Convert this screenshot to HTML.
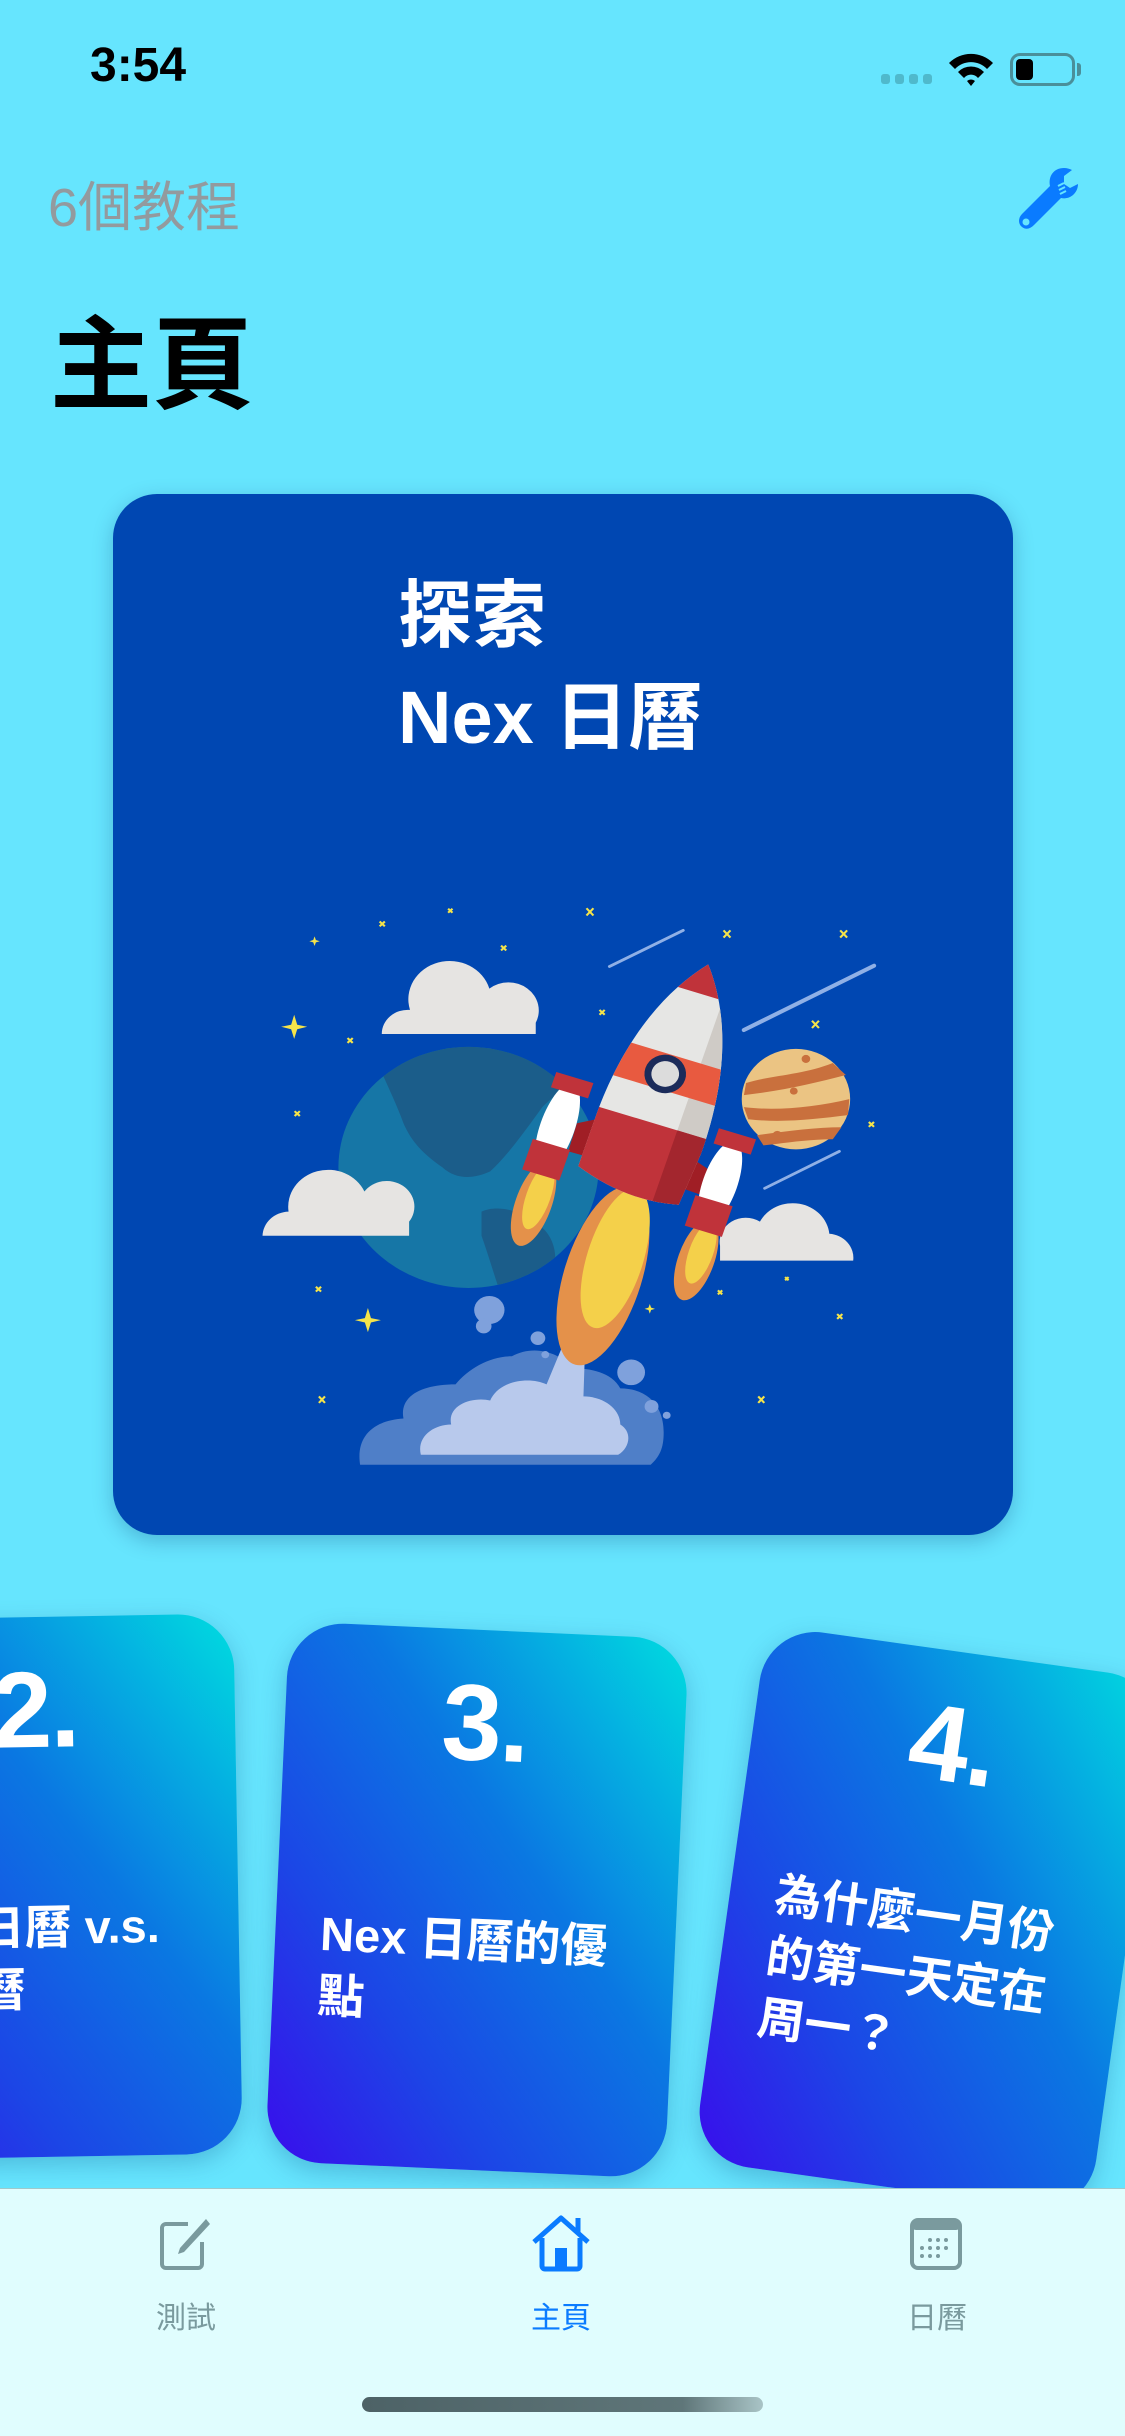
<!DOCTYPE html>
<html><head><meta charset="utf-8"><style>
*{margin:0;padding:0;box-sizing:border-box}
body{width:1125px;height:2436px;background:#66e5fe;position:relative;overflow:hidden;font-family:"Liberation Sans","Noto Sans CJK TC",sans-serif}
.abs{position:absolute}
.card{position:absolute;width:400px;height:540px;border-radius:56px;background:linear-gradient(to bottom left,#00dde0 0%,#0a78e2 40%,#1c45e6 72%,#3a0cec 100%);box-shadow:0 8px 24px rgba(0,60,120,.25);color:#fff;overflow:hidden}
.num{position:absolute;left:0;right:0;top:30px;text-align:center;font-size:108px;font-weight:bold;font-family:"Liberation Sans",sans-serif;letter-spacing:-2px}
.ct{position:absolute;left:45px;right:20px;top:280px;font-size:47px;line-height:62px;font-weight:bold;white-space:nowrap}
.tab{position:absolute;top:2188px;left:0;width:1125px;height:248px;background:#e0fdfe;border-top:1px solid #9fc9cc}
.lbl{position:absolute;top:2293px;width:120px;text-align:center;font-size:30px}
</style></head><body>
<!-- status bar -->
<div class="abs" style="left:90px;top:38px;font-size:48px;font-weight:bold;color:#000">3:54</div>
<div class="abs" style="left:881px;top:74px;width:51px;height:10px">
 <div class="abs" style="left:0;width:9px;height:10px;border-radius:3px;background:#4fb9cc"></div>
 <div class="abs" style="left:14px;width:9px;height:10px;border-radius:3px;background:#4fb9cc"></div>
 <div class="abs" style="left:28px;width:9px;height:10px;border-radius:3px;background:#4fb9cc"></div>
 <div class="abs" style="left:42px;width:9px;height:10px;border-radius:3px;background:#4fb9cc"></div>
</div>
<svg class="abs" style="left:946px;top:50px" width="50" height="36" viewBox="0 0 50 36">
 <path d="M3,13 A31,31 0 0 1 47,13 L41,19 A22,22 0 0 0 9,19Z" fill="#000"/>
 <path d="M12,22 A18,18 0 0 1 38,22 L32,28 A9,9 0 0 0 18,28Z" fill="#000"/>
 <path d="M21,31 L25,36 L29,31 A6,6 0 0 0 21,31Z" fill="#000"/>
</svg>
<div class="abs" style="left:1010px;top:53px;width:65px;height:33px;border:3px solid #4a8f9a;border-radius:10px"></div>
<div class="abs" style="left:1016px;top:59px;width:17px;height:21px;border-radius:4px;background:#000"></div>
<div class="abs" style="left:1077px;top:63px;width:4px;height:13px;border-radius:0 3px 3px 0;background:#4a8f9a"></div>

<div class="abs" style="left:48px;top:163px;font-size:54px;color:#939a9e">6個教程</div>
<svg class="abs" style="left:1012px;top:164px" width="68" height="68" viewBox="0 0 68 68">
 <path d="M52,4 C42,4 36,12 38,22 L10,50 C6,54 6,60 10,63 C14,66 18,65 22,61 L49,34 C58,36 66,29 66,20 L58,24 L52,20 L52,12 L60,6 C58,5 55,4 52,4Z" fill="#0a7bff"/>
 <circle cx="14" cy="58" r="3.5" fill="#66e5fe"/>
 <path d="M46,22 l6,-3 M47,26 l6,-3 M48,30 l6,-3" stroke="#66e5fe" stroke-width="2"/>
</svg>
<div class="abs" style="left:50px;top:284px;font-size:102px;font-weight:bold;color:#000">主頁</div>

<!-- big card -->
<div class="abs" style="left:113px;top:494px;width:900px;height:1041px;background:#0047b2;border-radius:44px;box-shadow:0 6px 20px rgba(0,40,100,.25)"></div>
<div class="abs" style="left:398px;top:565px;font-size:74px;line-height:102px;color:#fff;font-weight:bold">探索<br>Nex 日曆</div>

<svg class="abs" style="left:230px;top:850px" width="680" height="630" viewBox="0 0 1568 1568" preserveAspectRatio="none">
 <defs>
  <clipPath id="body"><path d="M0,-300 C80,-200 130,-50 130,150 L120,290 Q0,320 -130,270 L-130,150 C-130,-50 -80,-200 0,-300Z"/></clipPath>
  <clipPath id="earth"><circle cx="550" cy="790" r="300"/></clipPath>
 </defs>
 <g fill="#f5e44a">
  <path d="M148,410 L155,435 L178,440 L155,446 L148,470 L141,446 L118,440 L141,435Z"/>
  <path d="M318,1140 L325,1165 L348,1170 L325,1176 L318,1200 L311,1176 L288,1170 L311,1165Z"/>
  <path d="M968,1130 l3,9 l9,3 l-9,3 l-3,9 l-3,-9 l-9,-3 l9,-3Z"/>
  <path d="M195,215 l3,9 l9,3 l-9,3 l-3,9 l-3,-9 l-9,-3 l9,-3Z"/>
 </g>
 <g stroke="#f5e44a" stroke-width="5">
  <path d="M822,145 l16,18 M838,145 l-16,18"/><path d="M1138,200 l16,18 M1154,200 l-16,18"/><path d="M1407,200 l16,18 M1423,200 l-16,18"/>
  <path d="M1342,425 l16,18 M1358,425 l-16,18"/><path d="M345,178 l12,12 M357,178 l-12,12"/><path d="M503,146 l10,10 M513,146 l-10,10"/>
  <path d="M625,238 l12,12 M637,238 l-12,12"/><path d="M852,398 l12,12 M864,398 l-12,12"/><path d="M271,468 l12,12 M283,468 l-12,12"/>
  <path d="M149,650 l12,12 M161,650 l-12,12"/><path d="M1473,677 l12,12 M1485,677 l-12,12"/><path d="M198,1087 l12,12 M210,1087 l-12,12"/>
  <path d="M205,1360 l14,16 M219,1360 l-14,16"/><path d="M1218,1360 l14,16 M1232,1360 l-14,16"/><path d="M1400,1155 l12,12 M1412,1155 l-12,12"/>
  <path d="M1125,1096 l10,10 M1135,1096 l-10,10"/><path d="M1280,1063 l8,8 M1288,1063 l-8,8"/>
 </g>
 <g stroke="#8fb0e6" stroke-linecap="round">
  <path d="M875,290 L1045,200" stroke-width="7"/>
  <path d="M1185,448 L1485,288" stroke-width="10"/>
  <path d="M1233,842 L1405,750" stroke-width="7"/>
 </g>
 <circle cx="550" cy="790" r="300" fill="#1676a6"/>
 <g clip-path="url(#earth)" fill="#1b5d8a">
  <path d="M330,500 C400,460 520,450 620,470 C700,480 760,470 830,500 L850,560 C800,560 760,600 720,640 C680,700 640,760 600,800 C560,820 520,820 490,790 C450,760 420,730 400,680 C380,620 350,560 330,500Z"/>
  <path d="M580,900 C620,880 680,900 720,940 C760,980 760,1050 720,1100 C690,1140 660,1150 640,1150 C620,1100 600,1020 580,960Z"/>
  <path d="M700,420 C760,420 830,460 850,520 L800,520 C770,490 730,470 700,420Z"/>
 </g>
 <path d="M350,458 A60,60 0 0 1 415,398 A95,95 0 0 1 598,345 A70,70 0 0 1 705,430 L705,458Z" fill="#e6e4e2"/>
 <path d="M75,960 A62,62 0 0 1 135,900 A92,92 0 0 1 310,850 A62,62 0 0 1 413,925 L413,960Z" fill="#e6e4e2"/>
 <path d="M1130,1022 L1130,985 A60,60 0 0 1 1222,925 A85,85 0 0 1 1382,955 A60,60 0 0 1 1437,1022Z" fill="#e6e4e2"/>
 <circle cx="1305" cy="620" r="125" fill="#ebc483"/>
 <g fill="#c9703d">
  <path d="M1190,580 C1250,560 1320,560 1390,530 L1420,560 C1350,580 1270,600 1185,610Z"/>
  <path d="M1185,640 C1260,650 1350,640 1428,620 L1425,660 C1350,670 1270,680 1195,670Z"/>
  <path d="M1215,710 C1280,700 1350,690 1410,690 L1390,720 C1330,720 1280,730 1230,735Z"/>
  <circle cx="1328" cy="520" r="10"/><circle cx="1300" cy="600" r="9"/><circle cx="1262" cy="710" r="11"/><circle cx="1233" cy="578" r="7"/>
 </g>
 <path d="M300,1530 C290,1460 330,1420 400,1415 C390,1360 440,1330 520,1330 C550,1290 600,1260 650,1260 C700,1230 760,1250 790,1290 C830,1290 880,1300 900,1340 C960,1340 1000,1380 1000,1450 C1000,1490 990,1510 970,1530Z" fill="#4f7fc8"/>
 <path d="M440,1505 C430,1460 470,1430 510,1430 C500,1380 560,1360 600,1370 C620,1320 690,1310 730,1330 L780,1200 L820,1200 L815,1360 C860,1360 900,1390 900,1430 C930,1450 920,1490 895,1505Z" fill="#b8c9ec"/>
 <g fill="#7fa1dc"><circle cx="598" cy="1145" r="35"/><circle cx="585" cy="1185" r="18"/><circle cx="710" cy="1215" r="17"/><circle cx="727" cy="1256" r="9"/><circle cx="925" cy="1300" r="32"/><circle cx="972" cy="1385" r="16"/><circle cx="1007" cy="1407" r="9"/></g>
 <g transform="rotate(18 700 880)"><ellipse cx="700" cy="880" rx="42" ry="110" fill="#e4914a"/><ellipse cx="705" cy="860" rx="28" ry="85" fill="#f4d04a"/></g>
 <g transform="rotate(18 1075 1020)"><ellipse cx="1075" cy="1020" rx="42" ry="105" fill="#e4914a"/><ellipse cx="1080" cy="1000" rx="28" ry="80" fill="#f4d04a"/></g>
 <g transform="rotate(16 860 1060)"><ellipse cx="860" cy="1060" rx="90" ry="230" fill="#e4914a"/><ellipse cx="875" cy="1010" rx="65" ry="180" fill="#f4d04a"/></g>
 <path d="M800,680 L890,660 L1000,720 L1110,800 L1090,860 L880,780 L780,750Z" fill="#a01e25"/>
 <g transform="rotate(18 755 690)"><ellipse cx="755" cy="690" rx="40" ry="115" fill="#fff"/><rect x="710" y="560" width="90" height="40" fill="#c0333a"/><rect x="710" y="735" width="90" height="80" fill="#c0333a"/></g>
 <g transform="rotate(18 1130 830)"><ellipse cx="1130" cy="830" rx="40" ry="110" fill="#fff"/><rect x="1085" y="700" width="90" height="40" fill="#c0333a"/><rect x="1085" y="875" width="90" height="80" fill="#c0333a"/></g>
 <g transform="translate(1010,570) rotate(18)">
  <g clip-path="url(#body)">
   <rect x="-140" y="-310" width="280" height="620" fill="#e6e6e4"/>
   <rect x="60" y="-310" width="80" height="620" fill="#cfcbc6"/>
   <rect x="-140" y="-310" width="280" height="85" fill="#c0333a"/>
   <rect x="-140" y="-60" width="280" height="90" fill="#e85a40"/>
   <rect x="-140" y="115" width="280" height="200" fill="#c0333a"/>
   <rect x="60" y="115" width="80" height="200" fill="#a3262e"/>
  </g>
  <circle cx="-10" cy="-10" r="48" fill="#1b2b5a"/>
  <circle cx="-10" cy="-10" r="32" fill="#dcdcdc"/>
 </g>
</svg>

<div class="card" style="left:-162px;top:1617px;transform:rotate(-1deg)">
 <div class="num">2.</div>
 <div class="ct">農曆日曆 v.s.<br>農民曆</div>
</div>
<div class="card" style="left:277px;top:1630px;transform:rotate(2.6deg)">
 <div class="num">3.</div>
 <div class="ct">Nex 日曆的優<br>點</div>
</div>
<div class="card" style="left:728px;top:1650px;transform:rotate(8deg)">
 <div class="num">4.</div>
 <div class="ct" style="top:235px">為什麼一月份<br>的第一天定在<br>周一？</div>
</div>

<div class="tab"></div>
<svg class="abs" style="left:158px;top:2216px" width="56" height="56" viewBox="0 0 56 56">
 <path d="M30,8 H8 a4,4 0 0 0 -4,4 V48 a4,4 0 0 0 4,4 H40 a4,4 0 0 0 4,-4 V26" fill="none" stroke="#7a9a9e" stroke-width="4"/>
 <path d="M48,3 L22,32 L20,38 L26,36 L52,8Z" fill="#7a9a9e"/>
</svg>
<div class="lbl" style="left:126px;color:#7a9a9e">測試</div>
<svg class="abs" style="left:530px;top:2214px" width="62" height="58" viewBox="0 0 62 58">
 <path d="M4,28 L31,4 L58,28" fill="none" stroke="#0a7bff" stroke-width="5" stroke-linejoin="round"/>
 <path d="M48,4 V20" stroke="#0a7bff" stroke-width="5"/>
 <path d="M12,24 V52 a3,3 0 0 0 3,3 H47 a3,3 0 0 0 3,-3 V24" fill="none" stroke="#0a7bff" stroke-width="5"/>
 <rect x="25" y="34" width="12" height="21" fill="#0a7bff"/>
</svg>
<div class="lbl" style="left:501px;color:#0a7bff">主頁</div>
<svg class="abs" style="left:910px;top:2218px" width="52" height="52" viewBox="0 0 52 52">
 <rect x="2" y="2" width="48" height="48" rx="6" fill="none" stroke="#7a9a9e" stroke-width="4"/>
 <rect x="2" y="2" width="48" height="10" rx="4" fill="#7a9a9e"/>
 <g fill="#7a9a9e"><circle cx="20" cy="22" r="2"/><circle cx="28" cy="22" r="2"/><circle cx="36" cy="22" r="2"/><circle cx="12" cy="30" r="2"/><circle cx="20" cy="30" r="2"/><circle cx="28" cy="30" r="2"/><circle cx="36" cy="30" r="2"/><circle cx="12" cy="38" r="2"/><circle cx="20" cy="38" r="2"/><circle cx="28" cy="38" r="2"/></g>
</svg>
<div class="lbl" style="left:877px;color:#7a9a9e">日曆</div>
<div class="abs" style="left:362px;top:2397px;width:401px;height:15px;border-radius:8px;background:linear-gradient(to right,#4d6266,#5f7679 80%,#a9c4c6)"></div>
</body></html>
